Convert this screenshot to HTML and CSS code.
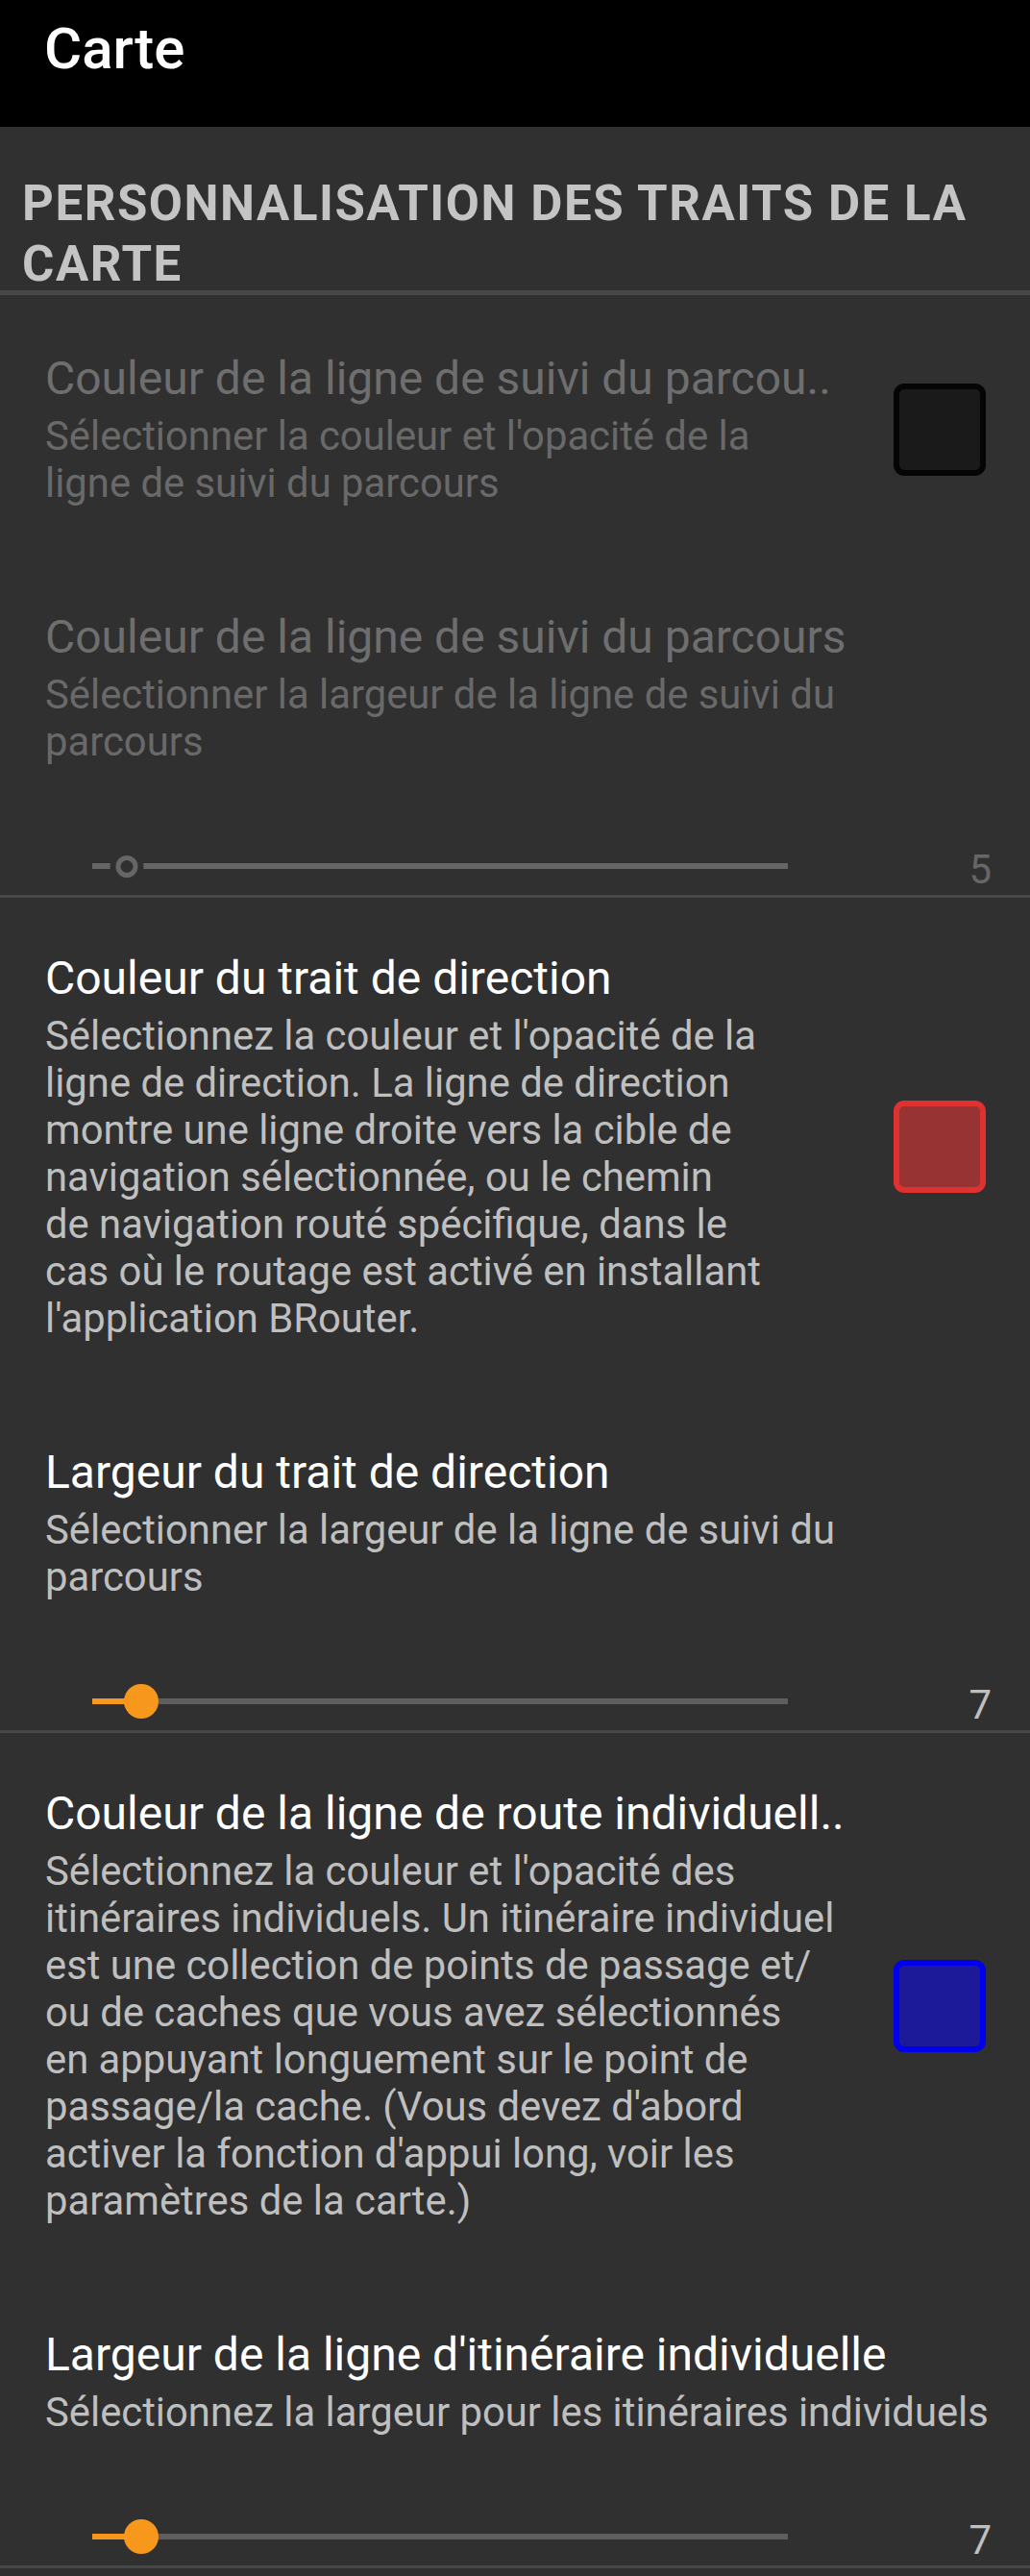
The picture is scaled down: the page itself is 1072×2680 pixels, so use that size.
FILE: index.html
```html
<!DOCTYPE html>
<html lang="fr">
<head>
<meta charset="utf-8">
<title>Carte</title>
<link rel="stylesheet" href="styles.css">
</head>
<body>
<header class="appbar">
  <h1 class="appbar-title">Carte</h1>
</header>
<main class="prefs">
  <section class="category">
    <h2 class="category-title">PERSONNALISATION DES TRAITS DE LA CARTE</h2>
  </section>

  <div class="pref pref-first is-disabled">
    <div class="pref-text">
      <div class="pref-title">Couleur de la ligne de suivi du parcou..</div>
      <div class="pref-summary">Sélectionner la couleur et l'opacité de la<br>ligne de suivi du parcours</div>
    </div>
    <div class="swatch swatch-black"></div>
  </div>

  <div class="pref pref-slider is-disabled">
    <div class="pref-text">
      <div class="pref-title">Couleur de la ligne de suivi du parcours</div>
      <div class="pref-summary">Sélectionner la largeur de la ligne de suivi du<br>parcours</div>
    </div>
    <div class="slider-row">
      <div class="slider">
        <div class="slider-track"></div>
        <div class="slider-thumb" style="left: 5%"></div>
      </div>
      <span class="slider-value">5</span>
    </div>
  </div>

  <div class="pref">
    <div class="pref-text">
      <div class="pref-title">Couleur du trait de direction</div>
      <div class="pref-summary">Sélectionnez la couleur et l'opacité de la<br>ligne de direction. La ligne de direction<br>montre une ligne droite vers la cible de<br>navigation sélectionnée, ou le chemin<br>de navigation routé spécifique, dans le<br>cas où le routage est activé en installant<br>l'application BRouter.</div>
    </div>
    <div class="swatch swatch-red"></div>
  </div>

  <div class="pref pref-slider">
    <div class="pref-text">
      <div class="pref-title">Largeur du trait de direction</div>
      <div class="pref-summary">Sélectionner la largeur de la ligne de suivi du<br>parcours</div>
    </div>
    <div class="slider-row">
      <div class="slider">
        <div class="slider-track"></div>
        <div class="slider-fill" style="width: 7%"></div>
        <div class="slider-thumb" style="left: 7%"></div>
      </div>
      <span class="slider-value">7</span>
    </div>
  </div>

  <div class="pref">
    <div class="pref-text">
      <div class="pref-title">Couleur de la ligne de route individuell..</div>
      <div class="pref-summary">Sélectionnez la couleur et l'opacité des<br>itinéraires individuels. Un itinéraire individuel<br>est une collection de points de passage et/<br>ou de caches que vous avez sélectionnés<br>en appuyant longuement sur le point de<br>passage/la cache. (Vous devez d'abord<br>activer la fonction d'appui long, voir les<br>paramètres de la carte.)</div>
    </div>
    <div class="swatch swatch-blue"></div>
  </div>

  <div class="pref pref-slider">
    <div class="pref-text">
      <div class="pref-title">Largeur de la ligne d'itinéraire individuelle</div>
      <div class="pref-summary">Sélectionnez la largeur pour les itinéraires individuels</div>
    </div>
    <div class="slider-row">
      <div class="slider">
        <div class="slider-track"></div>
        <div class="slider-fill" style="width: 7%"></div>
        <div class="slider-thumb" style="left: 7%"></div>
      </div>
      <span class="slider-value">7</span>
    </div>
  </div>
</main>
</body>
</html>
```

FILE: styles.css
```css
html, body {
  margin: 0;
  padding: 0;
  background: #303030;
}

body {
  font-family: Roboto, "Noto Sans", "Liberation Sans", sans-serif;
  color: #ffffff;
}

.appbar {
  background: #000000;
  height: 132px;
  box-sizing: border-box;
  padding: 16px 0 0 46px;
}

.appbar-title {
  margin: 0;
  font-size: 60px;
  font-weight: 500;
  line-height: 70px;
  color: #ffffff;
}

.category {
  box-sizing: border-box;
  height: 175px;
  padding: 48px 0 0 23px;
  border-bottom: 5px solid #484848;
}

.category-title {
  margin: 0;
  font-size: 51px;
  font-weight: 700;
  line-height: 63px;
  letter-spacing: 1.55px;
  color: #c4c4c4;
}

.pref {
  display: flex;
  align-items: center;
  padding: 56px 46px 52px 47px;
}

.pref-first {
  padding-top: 59px;
}

.pref-text {
  flex: 1;
  min-width: 0;
}

.pref-title {
  font-size: 48px;
  line-height: 56px;
  color: #ffffff;
  white-space: nowrap;
}

.pref-summary {
  margin-top: 7px;
  font-size: 41.8px;
  line-height: 49px;
  color: #bfbfbf;
  white-space: nowrap;
}

.is-disabled .pref-title {
  color: #6e6e6e;
}

.is-disabled .pref-summary {
  color: #696969;
}

.swatch {
  flex: none;
  width: 96px;
  height: 96px;
  box-sizing: border-box;
  margin-left: 40px;
  border: 6px solid;
  border-radius: 11px;
}

.swatch-black {
  background: #1a1a1a;
  border-color: #050505;
}

.swatch-red {
  background: #983333;
  border-color: #e03131;
}

.swatch-blue {
  background: #1c1a98;
  border-color: #0000ee;
}

.pref-slider {
  display: block;
  padding-bottom: 3px;
  border-bottom: 3px solid #484848;
}

.slider-row {
  display: flex;
  align-items: center;
  height: 54px;
  margin-top: 78px;
}

.slider {
  position: relative;
  flex: none;
  width: 724px;
  height: 36px;
  margin-left: 49px;
}

.slider-track {
  position: absolute;
  left: 0;
  right: 0;
  top: 15px;
  height: 6px;
  background: #5e5e5e;
}

.slider-fill {
  position: absolute;
  left: 0;
  top: 15px;
  height: 6px;
  background: #f7981d;
}

.slider-thumb {
  position: absolute;
  top: 0;
  width: 36px;
  height: 36px;
  border-radius: 50%;
  background: #f7981d;
  transform: translateX(-50%);
}

.slider-value {
  margin-left: auto;
  margin-right: -6px;
  padding-top: 7px;
  font-size: 42px;
  line-height: 49px;
  color: #bfbfbf;
}

.is-disabled .slider-track {
  background: #666666;
}

.is-disabled .slider-thumb {
  top: 6.5px;
  width: 23px;
  height: 23px;
  box-sizing: border-box;
  border: 5px solid #666666;
  background: #303030;
  box-shadow: 0 0 0 6px #303030;
}

.is-disabled .slider-value {
  color: #666666;
}
```
